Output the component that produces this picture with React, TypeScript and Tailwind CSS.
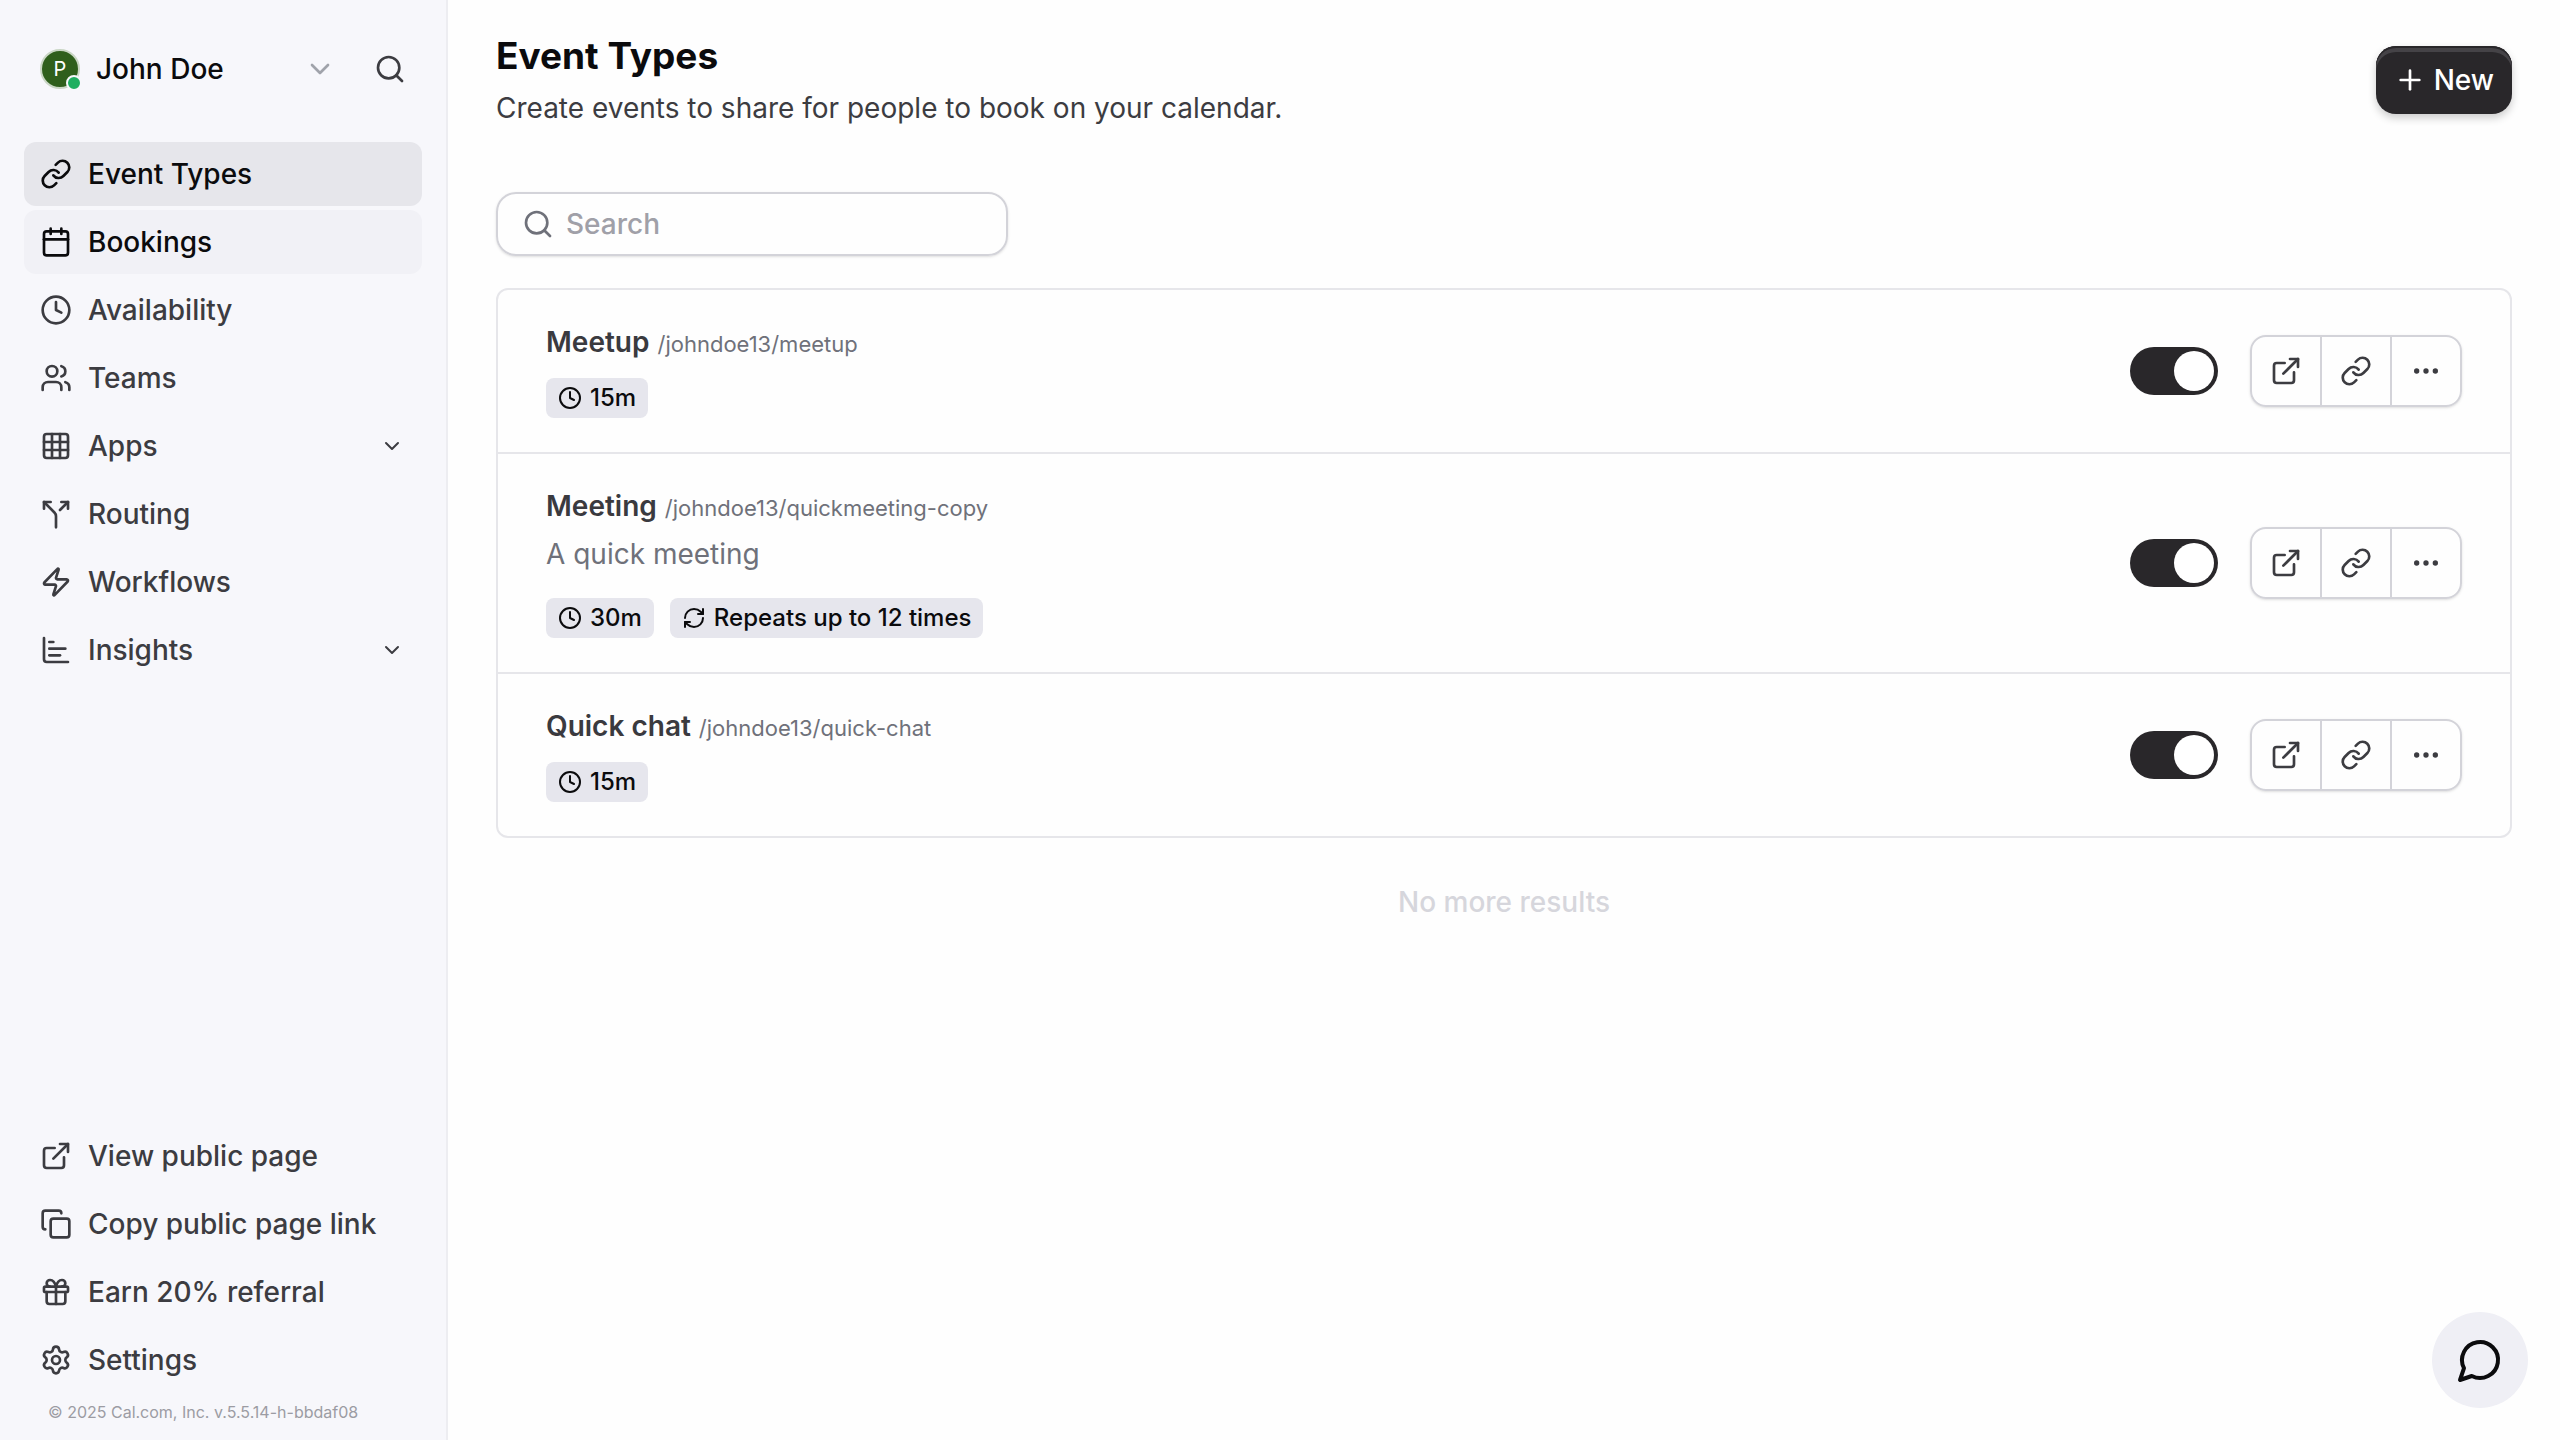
import { useState } from "react"
import {
  Calendar,
  ChartBar,
  ChevronDown,
  Clock,
  Copy,
  Ellipsis,
  ExternalLink,
  Gift,
  Grid3x3,
  Link as LinkIcon,
  Plus,
  RefreshCw,
  Search,
  Settings,
  Split,
  Users,
  Zap,
  type LucideIcon,
} from "lucide-react"

interface NavItemProps {
  label: string
  icon: LucideIcon
  state?: "active" | "hover"
  expandable?: boolean
}

interface EventTypeProps {
  title: string
  slug: string
  description?: string
  length: string
  repeats?: string
}

const mainNav: NavItemProps[] = [
  { label: "Event Types", icon: LinkIcon, state: "active" },
  { label: "Bookings", icon: Calendar, state: "hover" },
  { label: "Availability", icon: Clock },
  { label: "Teams", icon: Users },
  { label: "Apps", icon: Grid3x3, expandable: true },
  { label: "Routing", icon: Split },
  { label: "Workflows", icon: Zap },
  { label: "Insights", icon: ChartBar, expandable: true },
]

const bottomNav: NavItemProps[] = [
  { label: "View public page", icon: ExternalLink },
  { label: "Copy public page link", icon: Copy },
  { label: "Earn 20% referral", icon: Gift },
  { label: "Settings", icon: Settings },
]

const eventTypes: EventTypeProps[] = [
  { title: "Meetup", slug: "/johndoe13/meetup", length: "15m" },
  {
    title: "Meeting",
    slug: "/johndoe13/quickmeeting-copy",
    description: "A quick meeting",
    length: "30m",
    repeats: "Repeats up to 12 times",
  },
  { title: "Quick chat", slug: "/johndoe13/quick-chat", length: "15m" },
]

const navColors = {
  active: "bg-[#e6e6eb] text-[#0b0b0d]",
  hover: "bg-[#f1f1f6] text-[#0b0b0d]",
  idle: "text-[#3c3c41]",
}

function NavItem({ label, icon: Icon, state, expandable }: NavItemProps) {
  return (
    <a
      href="#"
      aria-current={state === "active" ? "page" : undefined}
      className={`flex h-16 items-center gap-4 rounded-xl pr-[18px] pl-4 font-medium ${navColors[state ?? "idle"]}`}
    >
      <Icon size={32} className="shrink-0" />
      <span className="flex-1">{label}</span>
      {expandable && <ChevronDown size={24} />}
    </a>
  )
}

function Sidebar() {
  return (
    <aside className="flex w-[448px] shrink-0 flex-col border-r-2 border-[#ededf1] bg-[#f7f7fb] px-6 pt-[37px]">
      <header className="flex items-center justify-between pr-4 pl-4">
        <button className="flex flex-1 items-center text-left">
          <span className="relative flex size-10 items-center justify-center rounded-full border-2 border-[#c9d6c4] bg-[#2f5f1c] text-xl text-white">
            P
            <span className="absolute -right-1 -bottom-1 size-4 rounded-full border-2 border-[#f7f7fb] bg-[#1fae60]" />
          </span>
          <span className="ml-4 flex-1 font-medium text-[#0b0b0d]">John Doe</span>
          <ChevronDown size={32} className="text-[#a0a3aa]" />
        </button>
        <button aria-label="Search" className="ml-[38px] flex h-16 items-center text-[#3c3c41]">
          <Search size={32} />
        </button>
      </header>

      <nav className="mt-[41px] flex flex-col gap-1">
        {mainNav.map((item) => (
          <NavItem key={item.label} {...item} />
        ))}
      </nav>

      <nav className="mt-auto flex flex-col gap-1">
        {bottomNav.map((item) => (
          <NavItem key={item.label} {...item} />
        ))}
      </nav>
      <small className="mt-2 mb-4 px-6 text-base text-[#9c9ca3]">© 2025 Cal.com, Inc. v.5.5.14-h-bbdaf08</small>
    </aside>
  )
}

function Badge({ icon: Icon, text }: { icon: LucideIcon; text: string }) {
  return (
    <span className="flex h-10 items-center gap-2 rounded-lg bg-[#e6e6ed] px-3 text-2xl font-medium text-[#0b0b0d]">
      <Icon size={24} />
      {text}
    </span>
  )
}

function EventTypeRow({ title, slug, description, length, repeats }: EventTypeProps) {
  const [enabled, setEnabled] = useState(true)
  const actionClass = "flex h-[68px] w-[70px] items-center justify-center"

  return (
    <li className="flex items-center justify-between px-12">
      <div className="pt-8 pb-[34px]">
        <a href="#" className="flex h-10 items-baseline gap-2">
          <h2 className="font-semibold text-[#3a3a3f]">{title}</h2>
          <small className="text-[22px] text-[#6f717a]">{slug}</small>
        </a>
        {description && <p className="mt-2 mb-6 text-[#6f717a]">{description}</p>}
        <div className={description ? "flex gap-4" : "mt-4 flex gap-4"}>
          <Badge icon={Clock} text={length} />
          {repeats && <Badge icon={RefreshCw} text={repeats} />}
        </div>
      </div>

      <div className="flex items-center gap-8">
        <input
          type="checkbox"
          role="switch"
          aria-label={`Enable ${title}`}
          checked={enabled}
          onChange={() => setEnabled(!enabled)}
          className="flex h-12 w-[88px] appearance-none items-center rounded-full bg-[#d4d4da] px-1 before:size-10 before:rounded-full before:bg-white checked:justify-end checked:bg-[#29272a]"
        />
        <div className="flex divide-x-2 divide-[#d3d3d9] rounded-[16px] border-2 border-[#d3d3d9] text-[#3c3c41] shadow-sm">
          <a href="#" aria-label="Preview" className={actionClass}>
            <ExternalLink size={32} />
          </a>
          <button aria-label="Copy link" className={actionClass}>
            <LinkIcon size={32} />
          </button>
          <button aria-label="More options" className="flex h-[68px] w-[68px] items-center justify-center">
            <Ellipsis size={32} />
          </button>
        </div>
      </div>
    </li>
  )
}

export default function App() {
  const [search, setSearch] = useState("")

  return (
    <div className="flex min-h-screen bg-[#fefefe] font-[Inter,sans-serif] text-[28px] leading-10">
      <Sidebar />

      <main className="flex-1 px-12 pt-8">
        <header className="flex items-start justify-between">
          <div>
            <h1 className="text-[37px] leading-12 font-bold text-[#0b0b0d]">Event Types</h1>
            <p className="mt-2 text-[#3c3c41]">Create events to share for people to book on your calendar.</p>
          </div>
          <button className="mt-[14px] flex h-[68px] items-center gap-2 rounded-[20px] bg-[#29272a] px-[18px] font-medium text-white shadow-[inset_0_2px_0_#29272a,inset_0_6px_0_#454347,0_4px_8px_rgba(0,0,0,0.2)]">
            <Plus size={32} />
            New
          </button>
        </header>

        <label className="mt-16 flex h-16 w-[512px] items-center gap-3 rounded-[20px] border-2 border-[#d3d3d9] px-6 shadow-sm">
          <Search size={32} className="shrink-0 text-[#6f717a]" />
          <input
            type="search"
            aria-label="Search event types"
            placeholder="Search"
            value={search}
            onChange={(e) => setSearch(e.target.value)}
            className="w-full min-w-0 font-medium outline-none placeholder:text-[#a0a0a8]"
          />
        </label>

        <ul className="mt-8 divide-y-2 divide-[#e6e6ea] rounded-xl border-2 border-[#e6e6ea]">
          {eventTypes.map((eventType) => (
            <EventTypeRow key={eventType.slug} {...eventType} />
          ))}
        </ul>

        <p className="mt-11 text-center font-medium text-[#d6d6dc]">No more results</p>
      </main>

      <button
        aria-label="Open chat"
        className="fixed right-8 bottom-8 flex size-24 items-center justify-center rounded-full bg-[#efeff5] text-[#0b0b0d]"
      >
        <svg
          width="48"
          height="48"
          viewBox="0 0 24 24"
          fill="none"
          stroke="currentColor"
          strokeWidth="2"
          strokeLinejoin="round"
        >
          <path d="M7.9 20A9 9 0 1 0 4 16.1L2 22Z" />
        </svg>
      </button>
    </div>
  )
}
